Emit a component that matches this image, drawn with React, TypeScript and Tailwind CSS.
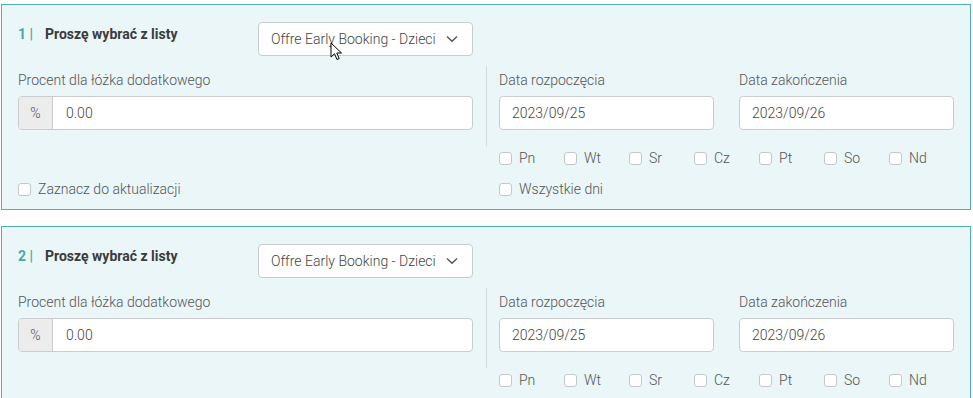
import React from "react"

const days = ["Pn", "Wt", "Sr", "Cz", "Pt", "So", "Nd"]

function Checkbox({ label }: { label: string }) {
  return (
    <label className="flex items-center gap-[7px] leading-[20px] text-[14px] font-light text-[#555]">
      <span className="block h-[13px] w-[13px] rounded-[3px] border border-[#c4c8cb] bg-white" />
      {label}
    </label>
  )
}

function Cursor() {
  return (
    <svg className="pointer-events-none absolute left-[328px] top-[37px]" width="13" height="20" viewBox="0 0 13 20">
      <path d="M1 1 L1 15 L4.5 11.8 L7 17.5 L9.2 16.6 L6.8 11 L11.5 11 Z" fill="#fff" stroke="#000" strokeWidth="1" strokeLinejoin="round" />
    </svg>
  )
}

function Card({ n, cursor }: { n: number; cursor?: boolean }) {
  return (
    <div className="relative ml-[1px] w-[970px] border border-[#4fb3ad] bg-[#eaf6f8] px-[16px] pt-[17px] pb-[10px]">
      {/* Header */}
      <div className="grid w-[455px] grid-cols-2 gap-x-[25px]">
        <div className="flex items-start pt-[2px] leading-[20px] text-[14px] font-bold">
          <span className="w-[27px] text-[#4aa9a8]">{n} |</span>
          <span className="text-[#3b3b3b]">Proszę wybrać z listy</span>
        </div>
        <div className="flex h-[34px] items-center justify-between rounded-[4px] border border-[#c9ccce] bg-white pl-[12px] pr-[14px] text-[14px] font-light text-[#444]">
          <span>Offre Early Booking - Dzieci</span>
          <svg width="12" height="8" viewBox="0 0 12 8">
            <path d="M1 1.5 L6 6.3 L11 1.5" fill="none" stroke="#5a5560" strokeWidth="1.5" />
          </svg>
        </div>
      </div>

      {/* Percent + dates */}
      <div className="mt-[10px] flex font-light">
        <div className="w-[455px] pt-[4px]">
          <div className="leading-[20px] text-[14px] text-[#555]">Procent dla łóżka dodatkowego</div>
          <div className="mt-[6px] flex h-[34px] overflow-hidden rounded-[4px] border border-[#c9ccce] bg-white text-[14px]">
            <div className="flex w-[34px] items-center justify-center border-r border-[#c9ccce] bg-[#ececec] text-[#555]">%</div>
            <div className="flex items-center pl-[13px] text-[#444]">0.00</div>
          </div>
        </div>
        <div className="ml-[13px] flex-1 border-l border-[#d6dadd] pl-[12px] pt-[4px] pb-[16px]">
          <div className="grid grid-cols-2 gap-x-[25px]">
            <div>
              <div className="leading-[20px] text-[14px] text-[#555]">Data rozpoczęcia</div>
              <div className="mt-[6px] flex h-[34px] items-center rounded-[4px] border border-[#c9ccce] bg-white pl-[12px] text-[14px] text-[#444]">2023/09/25</div>
            </div>
            <div>
              <div className="leading-[20px] text-[14px] text-[#555]">Data zakończenia</div>
              <div className="mt-[6px] flex h-[34px] items-center rounded-[4px] border border-[#c9ccce] bg-white pl-[12px] text-[14px] text-[#444]">2023/09/26</div>
            </div>
          </div>
        </div>
      </div>

      {/* Days */}
      <div className="mt-[2px] flex pl-[481px]">
        {days.map((d) => (
          <div key={d} className="w-[65px]">
            <Checkbox label={d} />
          </div>
        ))}
      </div>

      {/* Bottom row */}
      <div className="mt-[11px] flex">
        <div className="w-[481px]">
          <Checkbox label="Zaznacz do aktualizacji" />
        </div>
        <Checkbox label="Wszystkie dni" />
      </div>

      {cursor && <Cursor />}
    </div>
  )
}

export default function App() {
  return (
    <div className="h-[398px] w-[973px] overflow-hidden bg-white pt-[4px] font-[Roboto,sans-serif]">
      <Card n={1} cursor />
      <div className="mt-[16px]">
        <Card n={2} />
      </div>
    </div>
  )
}
